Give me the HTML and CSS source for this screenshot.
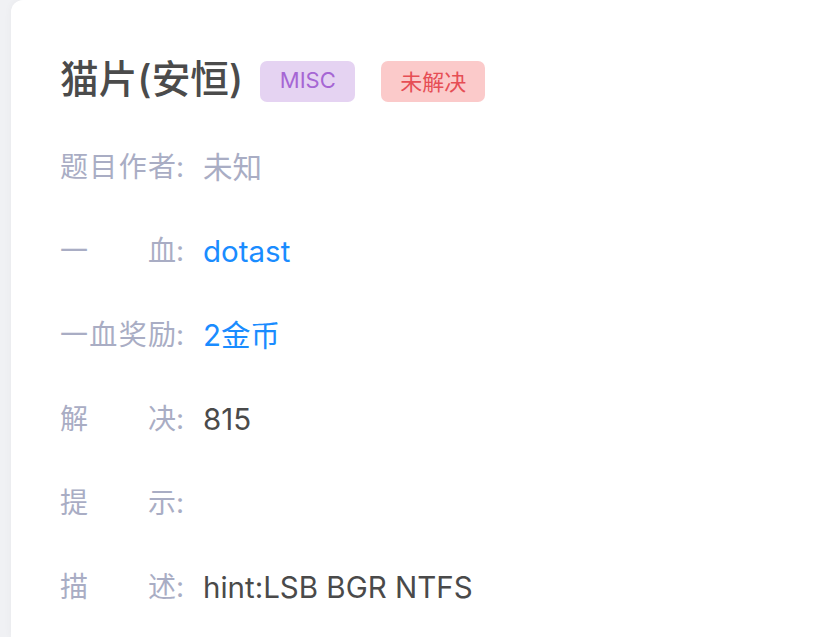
FILE: index.html
```html
<!DOCTYPE html>
<html lang="zh">
<head>
<meta charset="utf-8">
<link rel="stylesheet" href="styles.css">
</head>
<body>
<div class="page">
  <div class="card">
    <div class="head">
      <h1 class="title">猫片(安恒)</h1>
      <span class="tag tag-misc">MISC</span>
      <span class="tag tag-unsolved">未解决</span>
    </div>
    <div class="info">
      <div class="row"><span class="label"><span class="lt">题目作者</span>:</span><span class="val muted">未知</span></div>
      <div class="row"><span class="label"><span class="lt">一血</span>:</span><span class="val link">dotast</span></div>
      <div class="row"><span class="label"><span class="lt">一血奖励</span>:</span><span class="val link">2金币</span></div>
      <div class="row"><span class="label"><span class="lt">解决</span>:</span><span class="val">815</span></div>
      <div class="row"><span class="label"><span class="lt">提示</span>:</span><span class="val"></span></div>
      <div class="row"><span class="label"><span class="lt">描述</span>:</span><span class="val">hint:LSB BGR NTFS</span></div>
    </div>
  </div>
</div>
</body>
</html>
```

FILE: styles.css
```css
html, body {
  margin: 0;
  padding: 0;
  height: 100%;
  overflow: hidden;
}
body {
  background: #f0f1f4;
  font-family: Inter, "Noto Sans CJK SC", sans-serif;
  color: #454545;
}
.page {
  padding-left: 11px;
  height: 100%;
  box-sizing: border-box;
}
.card {
  background: #ffffff;
  border-radius: 12px 0 0 0;
  height: 100%;
  box-sizing: border-box;
  padding: 61px 0 0 49px;
  box-shadow: 0 0 8px rgba(0, 0, 0, 0.04);
}
.head {
  display: flex;
  align-items: center;
  height: 41px;
}
.title {
  margin: -4px 17px 0 0;
  font-size: 38.7px;
  font-weight: 500;
  color: #4b4b4b;
  line-height: 41px;
}
.tag {
  display: inline-flex;
  align-items: center;
  justify-content: center;
  height: 41px;
  padding-bottom: 3px;
  border-radius: 7px;
  font-size: 22px;
  box-sizing: border-box;
  margin-right: 26px;
}
.tag-misc {
  width: 95px;
  background: #e5d3f2;
  color: #a566d4;
}
.tag-unsolved {
  width: 104px;
  background: #fbcaca;
  color: #e64e55;
}
.info {
  display: flex;
  flex-direction: column;
  margin-top: 45px;
  gap: 44px;
}
.row {
  display: flex;
  align-items: center;
  height: 40px;
  font-size: 28px;
  line-height: 40px;
}
.label {
  display: flex;
  width: 143px;
  color: #a9adc4;
  flex: none;
}
.lt {
  display: inline-block;
  width: 116px;
  text-align: justify;
  text-align-last: justify;
}
.val {
  color: #4a4a4a;
  font-size: 29.5px;
}
.val.muted {
  color: #a9adc4;
}
.val.link {
  color: #1a8cff;
}
```
